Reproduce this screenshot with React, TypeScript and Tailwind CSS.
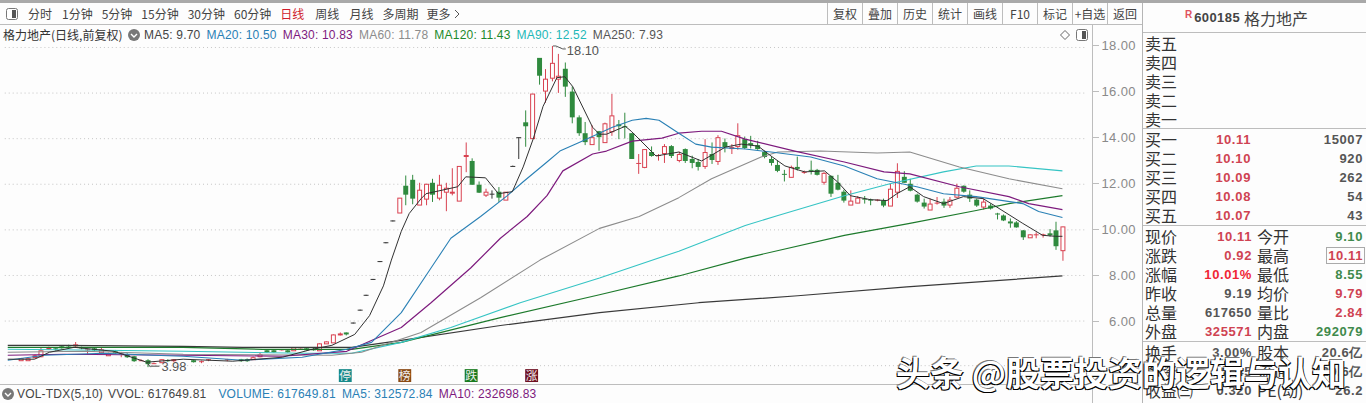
const cjk = "font-['Noto_Sans_CJK_SC','Liberation_Sans',sans-serif]";

type C = [number, number, number, number, number, string];

const z4: C[] = [
  [45, 92, 100, 92, 100, 'r'], [65, 92, 98, 92, 98, 'r'], [85, 82, 93, 84, 92, 'R'], [102, 60, 90, 70, 88, 'r'],
  [122, 58, 68, 60, 65, 'R'], [142, 60, 70, 62, 66, 'g'], [160, 56, 64, 58, 62, 'g'], [180, 52, 60, 54, 57, 'g'],
  [198, 44, 62, 52, 58, 'R'], [215, 58, 66, 60, 64, 'g'], [233, 64, 80, 66, 70, 'R'], [252, 60, 72, 62, 70, 'g'],
  [272, 62, 78, 66, 75, 'r'], [292, 76, 86, 78, 84, 'r'], [310, 68, 80, 71, 78, 'g'], [328, 74, 90, 78, 81, 'R'],
  [345, 78, 92, 80, 90, 'g'], [365, 86, 104, 88, 102, 'g'], [383, 96, 102, 98, 100, 'R'], [402, 96, 120, 98, 112, 'g'],
  [421, 106, 110, 107, 109, 'R'], [441, 96, 106, 97, 105, 'r'], [459, 96, 104, 98, 101, 'g'], [477, 96, 104, 97, 103, 'R'],
  [533, 98, 106, 100, 104, 'g'], [553, 100, 108, 101, 106, 'R'], [575, 96, 102, 97, 99, 'R'], [628, 95, 102, 96, 100, 'R'],
  [665, 95, 104, 96, 102, 'g'], [684, 94, 104, 95, 102, 'g'], [700, 88, 98, 90, 96, 'r'], [720, 76, 90, 80, 88, 'r'],
  [740, 68, 77, 70, 75, 'g'], [760, 66, 76, 68, 74, 'g'], [780, 66, 70, 67, 69, 'R'], [797, 68, 76, 70, 74, 'g'],
  [815, 60, 70, 60, 68, 'r'], [833, 60, 64, 61, 63, 'R'], [852, 60, 70, 62, 68, 'g'], [870, 62, 70, 65, 68, 'g'],
];

const z6: C[] = [
  [55, 478, 523, 478, 523, 'r'], [73, 410, 500, 441, 468, 'g'], [94, 408, 497, 423, 480, 'g'], [115, 432, 497, 454, 497, 'r'],
  [135, 435, 500, 436, 480, 'r'], [154, 420, 490, 433, 467, 'g'], [175, 408, 485, 438, 476, 'r'], [196, 432, 518, 448, 460, 'r'],
  [214, 388, 470, 460, 465, 'R'], [235, 382, 485, 382, 485, 'r'], [255, 310, 400, 348, 353, 'R'], [274, 358, 438, 366, 438, 'g'],
  [295, 428, 463, 438, 462, 'g'], [316, 450, 475, 460, 467, 'r'], [334, 455, 480, 466, 468, 'k'], [355, 445, 490, 459, 476, 'g'],
  [376, 460, 483, 460, 483, 'r'], [395, 380, 382, 380, 382, 'k'], [415, 295, 360, 295, 298, 'k'], [436, 213, 323, 249, 261, 'g'],
  [457, 163, 296, 163, 296, 'r'], [476, 55, 135, 55, 108, 'g'], [496, 88, 190, 118, 152, 'r'], [517, 18, 125, 70, 113, 'r'],
  [535, 42, 160, 109, 118, 'r'], [556, 68, 172, 87, 140, 'g'], [577, 140, 252, 156, 234, 'g'], [596, 228, 290, 233, 282, 'g'],
  [616, 248, 318, 282, 308, 'g'], [637, 258, 315, 293, 315, 'r'], [658, 275, 335, 277, 293, 'g'], [676, 250, 310, 252, 310, 'r'],
  [697, 163, 290, 228, 275, 'r'], [717, 242, 300, 256, 262, 'g'], [736, 220, 298, 260, 263, 'g'], [757, 282, 360, 282, 360, 'g'],
  [777, 345, 405, 373, 376, 'R'], [796, 330, 388, 330, 383, 'r'], [817, 322, 353, 338, 350, 'g'], [836, 345, 365, 349, 352, 'R'],
  [856, 315, 372, 322, 342, 'r'], [877, 318, 357, 322, 352, 'g'],
];

const z7: C[] = [
  [0, 128, 160, 135, 152, 'r'], [19, 118, 162, 120, 155, 'g'], [38, 140, 178, 150, 161, 'g'], [58, 150, 185, 160, 174, 'g'],
  [79, 90, 180, 130, 172, 'r'], [98, 100, 165, 135, 152, 'g'], [118, 78, 168, 85, 157, 'r'], [139, 88, 130, 100, 115, 'g'],
  [158, 105, 135, 113, 120, 'R'], [178, 42, 122, 78, 110, 'r'], [198, 82, 120, 90, 116, 'g'], [217, 80, 118, 103, 108, 'g'],
  [238, 95, 122, 108, 120, 'g'], [259, 125, 148, 128, 143, 'g'], [280, 143, 170, 150, 162, 'g'], [298, 155, 190, 168, 185, 'g'],
  [319, 183, 218, 196, 199, 'g'], [340, 170, 205, 175, 205, 'r'], [358, 143, 185, 175, 181, 'g'], [379, 185, 195, 188, 191, 'R'],
  [400, 155, 197, 184, 187, 'g'], [418, 180, 200, 184, 199, 'g'], [439, 190, 228, 193, 218, 'r'], [460, 200, 265, 202, 255, 'g'],
  [481, 198, 245, 222, 243, 'g'], [499, 243, 282, 250, 275, 'g'], [520, 245, 287, 275, 287, 'r'], [541, 262, 284, 268, 281, 'r'],
  [560, 262, 285, 271, 273, 'g'], [580, 270, 290, 273, 275, 'g'], [600, 272, 278, 274, 276, 'R'], [619, 270, 296, 277, 290, 'g'],
  [640, 225, 290, 241, 290, 'r'], [661, 163, 268, 185, 248, 'r'], [680, 187, 222, 204, 221, 'g'], [700, 210, 248, 224, 245, 'g'],
  [721, 255, 282, 258, 280, 'g'], [742, 270, 300, 282, 295, 'g'], [760, 270, 303, 286, 302, 'r'], [781, 265, 288, 283, 286, 'R'],
  [802, 270, 298, 278, 290, 'g'], [820, 265, 298, 273, 288, 'r'], [841, 225, 268, 237, 265, 'r'], [862, 230, 252, 230, 250, 'g'],
  [880, 245, 280, 257, 271, 'g'], [901, 270, 295, 274, 290, 'g'], [922, 270, 303, 280, 293, 'r'], [941, 285, 303, 291, 301, 'g'],
  [962, 313, 333, 316, 318, 'g'], [982, 318, 338, 320, 335, 'g'], [1003, 330, 358, 340, 344, 'g'], [1021, 338, 358, 342, 356, 'g'],
  [1042, 365, 395, 366, 386, 'g'], [1062, 378, 388, 378, 388, 'r'], [1081, 372, 390, 377, 379, 'R'], [1101, 376, 388, 378, 382, 'R'],
  [1122, 362, 385, 375, 380, 'g'], [1141, 340, 425, 367, 415, 'g'], [1161, 355, 458, 355, 425, 'r'],
];

const direct: C[] = [
  [317, 346, 353, 346, 353, 'r'], [324, 344, 346, 344, 346, 'r'], [331, 337, 345, 337, 345, 'r'], [338, 335, 338, 336, 338, 'R'], [344, 335, 338, 335, 337, 'g'],
  [351, 325, 326, 325, 326, 'k'], [358, 312, 313, 312, 313, 'k'], [364, 297, 298, 297, 298, 'k'], [371, 281, 282, 281, 282, 'k'],
  [378, 263, 264, 263, 264, 'k'], [384, 244, 245, 244, 245, 'k'], [391, 222, 223, 222, 223, 'k'],
];

const mapAll = (a: C[], ox: number, oy: number, kx: number): C[] =>
  a.map(([x, h, l, t, b, c]) => [ox + x / kx, oy + h / 3, oy + l / 3, oy + t / 3, oy + b / 3, c] as C);

const candles: C[] = [...mapAll(z4, 0, 330, 2.8), ...direct, ...mapAll(z6, 380, 40, 3), ...mapAll(z7, 680, 110, 3)];

const lines: { c: string; w: number; p: string }[] = [
  { c: '#3a3a3a', w: 1.2, p: '3,348 60,348 180,349 240,350 330,350 350,350 400,343 500,328 600,315 700,305 800,298 910,289 1067,278' },
  { c: '#1d7a2c', w: 1.2, p: '3,350 180,350 260,352 350,352 400,345 500,320 600,297 680,278 747,260 847,237 913,225 980,212 1013,205 1067,197' },
  { c: '#35c4c4', w: 1.1, p: '3,352 100,353 180,354 300,356 350,356 400,345 450,330 520,305 600,280 680,253 747,227 780,217 847,197 893,185 947,173 980,167 1013,167 1067,172' },
  { c: '#8c8c8c', w: 1.1, p: '3,355 80,354 180,357 330,358 360,355 420,335 480,300 540,262 600,230 640,218 680,199 713,180 763,158 780,153 823,152 880,154 913,153 963,168 1013,180 1067,190' },
  { c: '#7d1a7d', w: 1.2, p: '3,358 60,357 180,358 280,359 345,354 400,330 430,305 470,270 500,240 527,218 547,197 563,172 593,155 607,152 633,142 663,139 680,134 703,132 723,132 747,140 797,152 847,163 887,173 913,175 963,188 1013,198 1033,205 1067,211' },
  { c: '#2a80b5', w: 1.1, p: '3,363 40,358 100,356 150,358 180,359 240,363 300,360 345,352 370,345 400,315 430,270 450,240 480,218 507,197 523,183 547,163 560,152 580,143 613,128 633,121 647,119 660,121 680,134 697,145 713,148 747,150 773,153 813,158 847,167 880,180 920,188 947,195 980,198 1027,205 1043,213 1067,219' },
  { c: '#2f2f2f', w: 1, p: '3,362 30,362 45,355 70,350 110,354 143,365 180,362 230,364 280,360 310,352 330,348 353,337 368,318 382,288 390,262 400,233 408,215 420,200 425,195 457,188 465,178 485,179 498,195 512,193 523,168 533,140 543,107 557,78 565,77 573,87 593,128 600,135 607,135 626,127 632,132 657,157 680,153 703,162 727,148 743,145 760,147 773,157 787,167 807,173 827,172 840,183 853,197 873,201 890,202 900,195 913,188 927,198 947,205 967,198 987,200 1000,208 1027,225 1047,237 1060,238 1067,238' },
];

const gridY = [47, 93, 139, 185, 231, 277, 323, 368];

function Chart() {
  return (
    <svg width="1092" height="343" viewBox="0 44 1092 343" className="block">
      {gridY.map((y) => (
        <line key={y} x1="0" x2="1092" y1={y + 0.5} y2={y + 0.5} stroke="#c4c4c4" strokeDasharray="1 3" />
      ))}
      {candles.map(([x, h, l, t, b, c], i) => {
        const col = c === 'g' ? '#2f8a3e' : c === 'k' ? '#333333' : '#d8404f';
        const rx = Math.round(x);
        const top = Math.round(t);
        const bh = Math.max(1, Math.round(b) - top);
        return (
          <g key={i}>
            <line x1={rx + 0.5} x2={rx + 0.5} y1={h} y2={l} stroke={col} />
            {c === 'r' ? (
              <rect x={rx - 2 + 0.5} y={top + 0.5} width="4" height={bh} fill="#ffffff" stroke={col} />
            ) : (
              <rect x={rx - 2} y={top} width="5" height={bh} fill={col} />
            )}
          </g>
        );
      })}
      {lines.map((l, i) => (
        <polyline key={i} points={l.p} fill="none" stroke={l.c} strokeWidth={l.w} strokeLinejoin="round" />
      ))}
      <path d="M553 46h3M556 46l7 3h3" fill="none" stroke="#555" />
      <text x="567" y="55" fontSize="13" fill="#555" fontFamily="Liberation Sans">18.10</text>
      <path d="M144 366l3 4M147 369h9" fill="none" stroke="#444" />
      <text x="158" y="374" fontSize="13" fill="#555" fontFamily="Liberation Sans">3.98</text>
      {[
        [337, '#178a8a', '停'],
        [397, '#8a4a14', '榜'],
        [464, '#197a1f', '跌'],
        [525, '#6e1022', '涨'],
      ].map(([x, c, t]) => (
        <g key={t as string}>
          <rect x={x as number} y="372" width="13" height="13" fill={c as string} />
          <text x={(x as number) + 0.5} y="383" fontSize="12" fill="#eeeeee" fontFamily="Noto Sans CJK SC">{t as string}</text>
        </g>
      ))}
    </svg>
  );
}

function PanelIcon({ flip }: { flip?: boolean }) {
  return (
    <svg width="12" height="12" viewBox="0 0 12 12" className="shrink-0">
      <rect x="0.5" y="0.5" width="11" height="11" rx="2" fill="#fff" stroke="#777" />
      <rect x={flip ? 6 : 6} y="2" width="4" height="8" fill="#555" />
    </svg>
  );
}

function Round() {
  return (
    <svg width="12" height="12" viewBox="0 0 12 12" className="shrink-0">
      <circle cx="6" cy="6" r="6" fill="#777" />
      <path d="M3 5l3 3 3-3" fill="none" stroke="#fff" strokeWidth="1.4" />
    </svg>
  );
}

const val = "font-['Liberation_Sans',sans-serif] font-bold text-[13px] tracking-[0.6px] whitespace-nowrap text-right";
const label = `${cjk} text-[16px] leading-[19px] w-[32px] shrink-0 whitespace-nowrap text-[#333]`;

const RED = 'text-[#cf4352]';
const GREEN = 'text-[#3f8a4c]';
const GRAY = 'text-[#555]';

function Quote({ n, p, v }: { n: string; p?: string; v?: string }) {
  return (
    <div className="flex h-[19px] items-center">
      <span className={label}>{n}</span>
      <span className={`${val} w-[74px] ${RED}`}>{p}</span>
      <span className={`${val} flex-1 ${GRAY}`}>{v}</span>
    </div>
  );
}

function Data({ a, b, ac, c, d, dc, box }: { a: string; b: string; ac: string; c: string; d: string; dc: string; box?: boolean }) {
  return (
    <div className="flex h-[19px] items-center">
      <span className={label}>{a}</span>
      <span className={`${val} w-[75px] ${ac}`}>{b}</span>
      <span className={`${label} ml-[5px]`}>{c}</span>
      <span className="flex-1 flex justify-end">
        <span className={`${val} ${dc} ${box ? 'border border-[#aaa] px-[1px] leading-[15px] -mr-[2px]' : ''}`}>{d}</span>
      </span>
    </div>
  );
}

function Right() {
  return (
    <div className="w-[224px] shrink-0 border-l border-[#b5b5b5] bg-[#fdfdfd] flex flex-col">
      <div className="h-[30px] border-b border-[#bdbdbd] flex items-center pl-[42px] gap-[4px]">
        <span className="text-[10px] font-bold text-[#e0525f] font-['Liberation_Sans',sans-serif] -mt-[6px] -mr-[2px]">R</span>
        <span className="font-['Liberation_Sans',sans-serif] font-bold text-[13px] tracking-[0.4px] text-[#444]">600185</span>
        <span className={`${cjk} text-[16px] text-[#444]`}>格力地产</span>
      </div>
      <div className="pl-[2px] pr-[3px] border-b border-[#bdbdbd] h-[96px] pt-[1px]">
        {['卖五', '卖四', '卖三', '卖二', '卖一'].map((n) => (
          <Quote key={n} n={n} />
        ))}
      </div>
      <div className="pl-[2px] pr-[3px] border-b border-[#bdbdbd] h-[97px] pt-[1px]">
        <Quote n="买一" p="10.11" v="15007" />
        <Quote n="买二" p="10.10" v="920" />
        <Quote n="买三" p="10.09" v="262" />
        <Quote n="买四" p="10.08" v="54" />
        <Quote n="买五" p="10.07" v="43" />
      </div>
      <div className="pl-[2px] pr-[3px] border-b border-[#bdbdbd] h-[116px] pt-[1px]">
        <Data a="现价" b="10.11" ac={RED} c="今开" d="9.10" dc={GREEN} />
        <Data a="涨跌" b="0.92" ac={RED} c="最高" d="10.11" dc={RED} box />
        <Data a="涨幅" b="10.01%" ac="text-[#f02635]" c="最低" d="8.55" dc={GREEN} />
        <Data a="昨收" b="9.19" ac={GRAY} c="均价" d="9.79" dc={RED} />
        <Data a="总量" b="617650" ac={GRAY} c="量比" d="2.84" dc={RED} />
        <Data a="外盘" b="325571" ac={RED} c="内盘" d="292079" dc={GREEN} />
      </div>
      <div className="pl-[2px] pr-[3px] pt-[1px]">
        <Data a="换手" b="3.00%" ac={GRAY} c="股本" d="20.6亿" dc={GRAY} />
        <Data a="净资" b="6.45" ac={GRAY} c="流通" d="20.6亿" dc={GRAY} />
        <Data a="收益㈢" b="0.320" ac={GRAY} c="PE(动)" d="26.2" dc={GRAY} />
      </div>
    </div>
  );
}

export default function App() {
  const tabs: [string, string][] = [
    ['分时', 'ml-[10px]'], ['1分钟', 'ml-[10px]'], ['5分钟', 'ml-[9px]'], ['15分钟', 'ml-[9px]'], ['30分钟', 'ml-[9px]'],
    ['60分钟', 'ml-[9px]'], ['日线', 'ml-[9px] text-[#d01c2c]'], ['周线', 'ml-[11px]'], ['月线', 'ml-[10px]'], ['多周期', 'ml-[9px]'], ['更多', 'ml-[8px]'],
  ];
  const btns = ['复权', '叠加', '历史', '统计', '画线', 'F10', '标记', '+自选', '返回'];
  const mas: [string, string][] = [
    ['MA5: 9.70', 'text-[#444]'], ['MA20: 10.50', 'text-[#2a80b5]'], ['MA30: 10.83', 'text-[#7d1a7d]'], ['MA60: 11.78', 'text-[#8c8c8c]'],
    ['MA120: 11.43', 'text-[#1c8a2c]'], ['MA90: 12.52', 'text-[#22b8b8]'], ['MA250: 7.93', 'text-[#555]'],
  ];
  return (
    <div className={`relative w-[1366px] h-[403px] overflow-hidden bg-[#fdfdfd] flex flex-col ${cjk}`}>
      <div className="h-[3px] bg-[#a9a9a9] shrink-0" />
      <div className="flex flex-1 min-h-0">
        <div className="w-[1142px] shrink-0 flex flex-col">
          <div className="h-[22px] shrink-0 border-b border-[#bdbdbd] flex items-stretch text-[12px] text-[#444]">
            <div className="flex items-center flex-1 pl-[6px]">
              <PanelIcon />
              {tabs.map(([t, c]) => (
                <span key={t} className={`whitespace-nowrap ${c}`}>{t}</span>
              ))}
              <svg width="7" height="10" viewBox="0 0 7 10" className="ml-[4px]"><path d="M1 1l4 4-4 4" fill="none" stroke="#555" /></svg>
            </div>
            {btns.map((b) => (
              <div key={b} className="w-[35px] border-l border-[#bdbdbd] flex items-center justify-center whitespace-nowrap">{b}</div>
            ))}
          </div>
          <div className="flex flex-1 min-h-0">
            <div className="w-[1092px] shrink-0 flex flex-col border-r border-[#bdbdbd] box-content">
              <div className="h-[19px] shrink-0 flex items-center pl-[3px] pr-[4px] text-[12px]">
                <span className="text-[#333] whitespace-nowrap w-[125px]">格力地产(日线,前复权)</span>
                <Round />
                <div className="flex gap-[6px] ml-[4px] font-['Liberation_Sans',sans-serif] tracking-[0.2px]">
                  {mas.map(([t, c]) => (
                    <span key={t} className={`whitespace-nowrap ${c}`}>{t}</span>
                  ))}
                </div>
                <div className="ml-auto flex items-center gap-[6px]">
                  <svg width="10" height="10" viewBox="0 0 10 10"><path d="M5 .5L9.5 5 5 9.5.5 5z" fill="none" stroke="#666" /></svg>
                  <PanelIcon flip />
                </div>
              </div>
              <Chart />
              <div className="flex-1 border-t border-[#bdbdbd] flex items-center pl-[2px] text-[12px] font-['Liberation_Sans',sans-serif] tracking-[0.2px] whitespace-nowrap">
                <Round />
                <span className="ml-[3px] text-[#444]">VOL-TDX(5,10)</span>
                <span className="ml-[5px] text-[#444]">VVOL: 617649.81</span>
                <span className="ml-[12px] text-[#2a80b5]">VOLUME: 617649.81</span>
                <span className="ml-[6px] text-[#2a80b5]">MA5: 312572.84</span>
                <span className="ml-[6px] text-[#7d1a7d]">MA10: 232698.83</span>
              </div>
            </div>
            <div className="flex-1 flex flex-col pt-[12px] font-['Liberation_Sans',sans-serif] text-[13px] text-[#8a8a8a] tracking-[0.4px]">
              {['18.00', '16.00', '14.00', '12.00', '10.00', '8.00', '6.00'].map((t) => (
                <div key={t} className="h-[46px] shrink-0 flex items-start">
                  <span className="w-[6px] h-px bg-[#bdbdbd] mt-[8px] shrink-0" />
                  <span className="flex-1 text-right pr-[6px] leading-[17px]">{t}</span>
                </div>
              ))}
            </div>
          </div>
        </div>
        <Right />
      </div>
      <div className="absolute left-[896px] top-[349px] text-[34px] leading-[46px] font-bold whitespace-nowrap text-white [text-shadow:-1px_1px_0_#000,1px_1px_0_#000,-1px_-1px_0_#777]">
        头条 @股票投资的逻辑与认知
      </div>
    </div>
  );
}
